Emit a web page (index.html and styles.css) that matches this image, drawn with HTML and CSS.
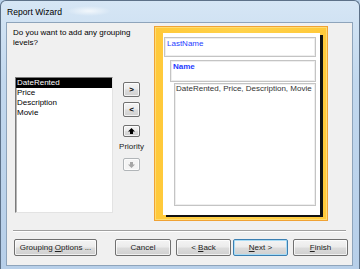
FILE: index.html
```html
<html>
<head>
<title>Report Wizard</title>
<link rel="stylesheet" href="styles.css">
</head>
<body>

<div class="window">
<div class="titlebar"><span class="title">Report Wizard</span></div>
<div class="client">

<div class="main">
<div class="left">
<p class="prompt">Do you want to add any grouping levels?</p>
<div class="picker">
<ul class="listbox">
<li class="sel">DateRented</li>
<li>Price</li>
<li>Description</li>
<li>Movie</li>
</ul>
<div class="movers">
<button class="btn mv add">&gt;</button>
<button class="btn mv del">&lt;</button>
<button class="btn pr up"><svg width="7" height="6" viewBox="0 0 7 6"><path d="M3.5 0 L7 3.5 H5 V6 H2 V3.5 H0 Z" fill="#000"/></svg></button>
<span class="prio">Priority</span>
<button class="btn pr down" disabled><svg width="7" height="6" viewBox="0 0 7 6"><path d="M3.5 6 L7 2.5 H5 V0 H2 V2.5 H0 Z" fill="#a6a6a6"/></svg></button>
</div>
</div>
</div>

<div class="preview">
<div class="page">
<div class="lvl lvl1">LastName</div>
<div class="lvl lvl2">Name</div>
<div class="lvl lvl3">DateRented, Price, Description, Movie</div>
</div>
</div>
</div>

<div class="sep"></div>

<div class="footer">
<button class="btn options"><span>Grouping <u>O</u>ptions ...</span></button>
<button class="btn cancel"><span>Cancel</span></button>
<button class="btn back"><span>&lt; <u>B</u>ack</span></button>
<button class="btn next"><span><u>N</u>ext &gt;</span></button>
<button class="btn finish"><span><u>F</u>inish</span></button>
</div>

</div>
</div>

</body>
</html>
```

FILE: styles.css
```css
body {
	margin: 0;
	padding: 0;
	font-family: "Liberation Sans", Arial, sans-serif;
	font-size: 8px;
	background: #b9d1ea;
	overflow: hidden;
}
.window {
	width: 360px;
	height: 269px;
	box-sizing: border-box;
	border: 1px solid #5d7188;
	border-bottom: none;
	border-radius: 6px 6px 0 0;
	background:
		radial-gradient(ellipse 22px 5px at 88px 10px, rgba(255,255,255,0.7), rgba(255,255,255,0) 100%),
		linear-gradient(to bottom, #d6e6f5, #c2d8ee 30%, #b7cfe9 100%);
	display: flex;
	flex-direction: column;
}
.titlebar {
	height: 21px;
	padding-left: 6px;
	display: flex;
	align-items: center;
}
.title {
	font-size: 8.6px;
	color: #000;
}
.client {
	width: 347px;
	height: 244px;
	margin-left: 5px;
	box-sizing: border-box;
	border: 1px solid #8ea4bb;
	background: #f0f0f0;
	display: flex;
	flex-direction: column;
}
.main {
	display: flex;
	padding-left: 6px;
	height: 198px;
}
.left {
	width: 128px;
}
.prompt {
	margin: 5px 0 0 0;
	line-height: 10px;
	color: #000;
}
.picker {
	display: flex;
	margin: 29px 0 0 2px;
}
.listbox {
	list-style: none;
	margin: 0;
	padding: 0;
	width: 98px;
	height: 136px;
	box-sizing: border-box;
	border: 1px solid;
	border-color: #7b7b7b #e3e3e3 #e3e3e3 #7b7b7b;
	box-shadow: inset 1px 1px 0 #b5b5b5;
	background: #fff;
}
.listbox li {
	height: 10px;
	line-height: 10px;
	padding-left: 1px;
	color: #000;
}
.listbox li.sel {
	background: #000;
	color: #fff;
}
.movers {
	display: flex;
	flex-direction: column;
	align-items: center;
	width: 17px;
	margin-left: 10px;
	padding-top: 5px;
}
.btn {
	font: inherit;
	color: #000;
	padding: 0;
	box-sizing: border-box;
	border: 1px solid #707070;
	border-radius: 2px;
	background: linear-gradient(to bottom, #f4f4f4 0%, #ebebeb 48%, #dcdcdc 52%, #cfcfcf 100%);
	box-shadow: inset 0 0 0 1px rgba(255,255,255,0.7);
	display: flex;
	align-items: center;
	justify-content: center;
}
.mv {
	width: 17px;
	height: 15px;
	font-weight: bold;
}
.del {
	margin-top: 5px;
}
.pr {
	width: 17px;
	height: 12px;
}
.up {
	margin-top: 8px;
}
.prio {
	margin-top: 5px;
	line-height: 10px;
	white-space: nowrap;
	color: #222;
}
.down {
	margin-top: 6px;
	height: 13px;
	border-color: #b1b5b8;
	background: #f4f4f4;
}
.preview {
	margin: 3px 0 0 13px;
	width: 174px;
	height: 195px;
	box-sizing: border-box;
	border: 1px solid #f0a234;
	background: linear-gradient(to right, #ffc93a, #ffd24a 50%, #ffc93a);
	box-shadow: inset 0 0 0 1px #ffdc70;
	padding: 6px 7px 5px 8px;
}
.page {
	width: 157px;
	height: 182px;
	background: #fff;
	box-shadow: 3px 2px 0 #111;
	padding-top: 4px;
	box-sizing: border-box;
}
.lvl {
	box-sizing: border-box;
	border: 1px solid #c4c4c4;
	box-shadow: inset 0 0 0 1px #eeeeee;
	line-height: 10px;
}
.lvl1 {
	margin-left: 1px;
	width: 152px;
	height: 20px;
	padding: 1px 0 0 2px;
	color: #1f3cff;
}
.lvl2 {
	margin: 3px 0 0 7px;
	width: 146px;
	height: 22px;
	padding: 1px 0 0 2px;
	color: #1f3cff;
	font-weight: bold;
}
.lvl3 {
	margin: 1px 0 0 11px;
	width: 142px;
	height: 123px;
	padding: 0 0 0 1px;
	color: #333;
}
.sep {
	margin: 9px 6px 0 6px;
	border-top: 1px solid #a0a0a0;
	border-bottom: 1px solid #fff;
}
.footer {
	display: flex;
	margin-top: 7px;
	padding-left: 7px;
}
.footer .btn {
	height: 17px;
	width: 55px;
	color: #222;
}
.footer .options {
	width: 83px;
}
.footer .cancel {
	width: 56px;
	margin-left: 18px;
}
.footer .back {
	margin-left: 5px;
}
.footer .next {
	margin-left: 2px;
	border-color: #3c7fb1;
	box-shadow: inset 0 0 0 1px #a9dcf5;
}
.footer .finish {
	margin-left: 5px;
}
```
